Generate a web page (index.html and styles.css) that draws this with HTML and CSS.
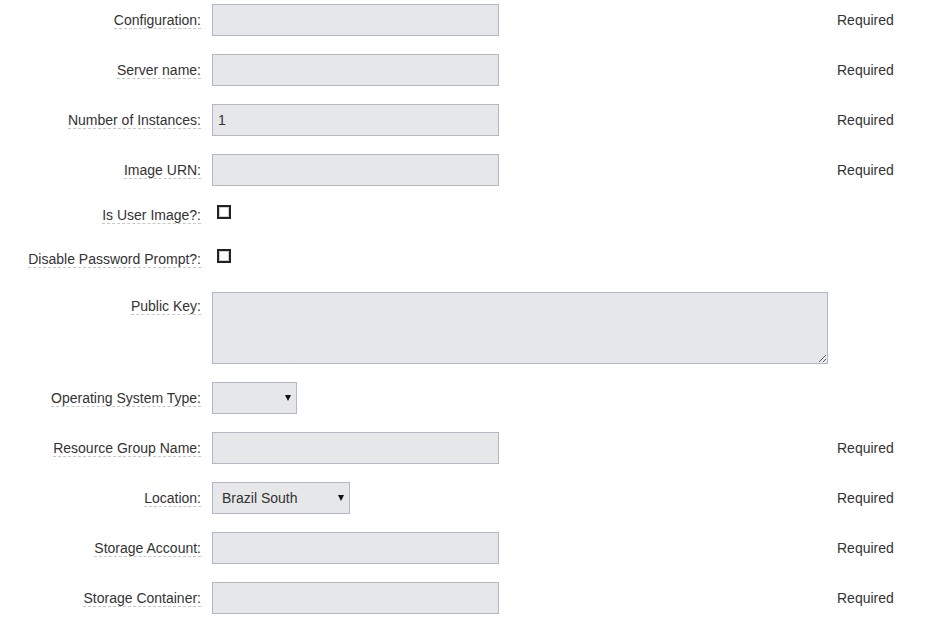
FILE: index.html
```html
<!DOCTYPE html>
<html>
<head>
<meta charset="utf-8">
<link rel="stylesheet" href="styles.css">
</head>
<body>
<form class="form">
  <div class="lbl"><span>Configuration:</span></div>
  <div class="fld"><input class="txt" type="text"></div>
  <div class="req">Required</div>

  <div class="lbl"><span>Server name:</span></div>
  <div class="fld"><input class="txt" type="text"></div>
  <div class="req">Required</div>

  <div class="lbl"><span>Number of Instances:</span></div>
  <div class="fld"><input class="txt" type="text" value="1"></div>
  <div class="req">Required</div>

  <div class="lbl"><span>Image URN:</span></div>
  <div class="fld"><input class="txt" type="text"></div>
  <div class="req">Required</div>

  <div class="lbl lbl-cb"><span>Is User Image?:</span></div>
  <div class="fld fld-cb"><input class="cb" type="checkbox"></div>
  <div class="req"></div>

  <div class="lbl lbl-cb"><span>Disable Password Prompt?:</span></div>
  <div class="fld fld-cb"><input class="cb" type="checkbox"></div>
  <div class="req"></div>

  <div class="lbl lbl-ta"><span>Public Key:</span></div>
  <div class="fld"><textarea class="ta"></textarea></div>
  <div class="req"></div>

  <div class="lbl"><span>Operating System Type:</span></div>
  <div class="fld"><div class="sel sel-os"><select><option></option></select></div></div>
  <div class="req"></div>

  <div class="lbl"><span>Resource Group Name:</span></div>
  <div class="fld"><input class="txt" type="text"></div>
  <div class="req">Required</div>

  <div class="lbl"><span>Location:</span></div>
  <div class="fld"><div class="sel sel-loc"><select><option>Brazil South</option></select></div></div>
  <div class="req">Required</div>

  <div class="lbl"><span>Storage Account:</span></div>
  <div class="fld"><input class="txt" type="text"></div>
  <div class="req">Required</div>

  <div class="lbl"><span>Storage Container:</span></div>
  <div class="fld"><input class="txt" type="text"></div>
  <div class="req">Required</div>
</form>
</body>
</html>
```
FILE: styles.css
```css
html, body {
  margin: 0;
  padding: 0;
  background: #fff;
}
body {
  font-family: "Liberation Sans", Arial, sans-serif;
  font-size: 14px;
  color: #333;
}
.form {
  display: grid;
  grid-template-columns: 212px 625px auto;
  row-gap: 18px;
  padding-top: 4px;
  margin: 0;
}
.lbl {
  text-align: right;
  padding-right: 11px;
  padding-top: 8px;
  line-height: 16px;
}
.lbl span {
  display: inline-block;
  border-bottom: 1px dashed #c8c8c8;
  line-height: 16px;
}
.lbl-cb {
  padding-top: 3px;
}
.lbl-ta {
  padding-top: 6px;
}
.fld {
  min-height: 32px;
}
.fld-cb {
  min-height: 26px;
}
.req {
  padding-top: 8px;
  line-height: 16px;
}
.txt {
  box-sizing: border-box;
  width: 287px;
  height: 32px;
  margin: 0;
  padding: 0 5px;
  border: 1px solid #b3b7c8;
  background: #e6e7e9;
  font-family: "Liberation Sans", Arial, sans-serif;
  font-size: 14px;
  color: #333;
  outline: none;
}
.cb {
  appearance: none;
  -webkit-appearance: none;
  box-sizing: border-box;
  width: 14px;
  height: 14px;
  margin: 1px 0 0 5px;
  border: 2px solid #222;
  background: #fff;
  box-shadow: inset 0 0 0 1px #cfcfcf;
  display: block;
}
.ta {
  box-sizing: border-box;
  display: block;
  width: 616px;
  height: 72px;
  margin: 0;
  border: 1px solid #b3b7c8;
  background: #e6e7e9;
  font-family: "Liberation Sans", Arial, sans-serif;
  font-size: 14px;
  outline: none;
}
.sel {
  position: relative;
  display: inline-block;
  vertical-align: top;
}
.sel select {
  appearance: none;
  -webkit-appearance: none;
  box-sizing: border-box;
  height: 32px;
  margin: 0;
  padding: 0 20px 0 9px;
  border: 1px solid #b3b7c8;
  border-radius: 0;
  background: #e6e7e9;
  font-family: "Liberation Sans", Arial, sans-serif;
  font-size: 14px;
  color: #333;
  outline: none;
}
.sel-os select {
  width: 85px;
}
.sel-loc select {
  width: 138px;
}
.sel::after {
  content: "";
  position: absolute;
  right: 6px;
  top: 13px;
  width: 0;
  height: 0;
  border-left: 3px solid transparent;
  border-right: 3px solid transparent;
  border-top: 6px solid #111;
  pointer-events: none;
}
```
